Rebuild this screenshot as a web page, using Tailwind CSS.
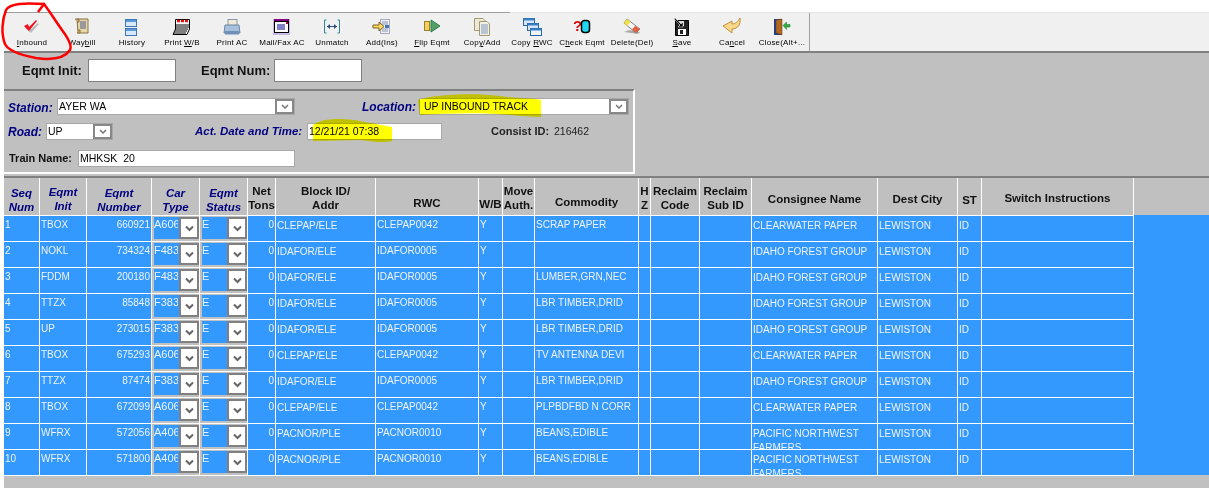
<!DOCTYPE html>
<html lang="en">
<head>
  <meta charset="UTF-8" />
  <title>Inbound</title>
  <script src="https://cdn.jsdelivr.net/npm/@tailwindcss/browser@4"></script>
</head>
<body class="relative w-[1209px] h-[488px] overflow-hidden bg-white pt-3 pl-1 font-['Liberation_Sans',Arial,sans-serif]">

  <!-- toolbar -->
  <div class="flex h-[1px]">
    <div class="w-[506px] bg-[#a0a0a0]"></div>
    <div class="flex-1 bg-[#e4e4e4]"></div>
  </div>
  <div id="toolbar" class="flex h-[40px] pl-[3px] bg-[#f0f0f0] border-b-2 border-b-[#808080]"></div>

  <div class="h-[436px] bg-[#c0c0c0]">
    <!-- eqmt row -->
    <div class="flex items-center h-[36px] pb-[1px] pl-[18px]">
      <span class="w-[66px] text-[13px] font-bold text-[#111]">Eqmt Init:</span>
      <input class="w-[88px] h-[23px] bg-white border border-[#808080]" />
      <span class="ml-[25px] w-[73px] text-[13px] font-bold text-[#111]">Eqmt Num:</span>
      <input class="w-[88px] h-[23px] bg-white border border-[#808080]" />
    </div>

    <!-- header form -->
    <div class="w-[631px] h-[85px] pl-1 pt-[7px] border-t-2 border-t-[#808080] border-r-2 border-b-2 border-r-white border-b-white text-[10.5px] text-black">
      <div class="flex items-center h-[17px]">
        <span class="w-[49px] mt-[3px] text-[12px] font-bold italic text-[#000080]">Station:</span>
        <div class="flex w-[238px] h-[17px] bg-white border border-[#a8a8a8]">
          <span class="flex-1 pl-[1px] leading-[15px]">AYER WA</span>
          <span class="sel-btn w-[19px]"></span>
        </div>
        <span class="ml-[67px] w-[57px] mt-[1px] text-[12px] font-bold italic text-[#000080]">Location:</span>
        <div class="flex w-[210px] h-[17px] bg-white border border-[#a8a8a8]">
          <span class="flex-1 pl-[4px] leading-[15px]">UP INBOUND TRACK</span>
          <span class="sel-btn w-[19px]"></span>
        </div>
      </div>
      <div class="flex items-center h-[17px] mt-[8px]">
        <span class="w-[38px] mt-[1px] text-[12px] font-bold italic text-[#000080]">Road:</span>
        <div class="flex w-[67px] h-[17px] bg-white border border-[#a8a8a8]">
          <span class="flex-1 pl-[1px] leading-[14px]">UP</span>
          <span class="sel-btn w-[19px]"></span>
        </div>
        <span class="ml-[82px] w-[112px] text-[11.5px] font-bold italic text-[#000080] whitespace-nowrap">Act. Date and Time:</span>
        <div class="w-[135px] h-[17px] pl-[1px] bg-white border border-[#a8a8a8] leading-[14px]">12/21/21 07:38</div>
        <span class="ml-[49px] w-[63px] text-[11px] font-bold text-[#222]">Consist ID:</span>
        <span class="text-[10.5px] text-[#222]">216462</span>
      </div>
      <div class="flex items-center h-[17px] mt-[10px]">
        <span class="ml-[1px] w-[69px] text-[11px] font-bold text-[#111]">Train Name:</span>
        <div class="w-[217px] h-[17px] pl-[1px] bg-white border border-[#a8a8a8] leading-[14px]">MHKSK&nbsp; 20</div>
      </div>
    </div>

    <!-- grid -->
    <div class="mt-[2px] flex border-t-2 border-t-[#808080]">
      <table class="table-fixed border-separate border-spacing-0 w-[1130px] shrink-0 text-[10px]">
        <colgroup id="cols"></colgroup>
        <thead><tr id="head"></tr></thead>
        <tbody id="rows"></tbody>
      </table>
      <div class="flex-1 flex flex-col">
        <div class="h-[37px]"></div>
        <div class="h-[260px] bg-[#3399ff]"></div>
      </div>
    </div>
  </div>

  <!-- marker scribbles pasted over the screenshot -->
  <svg class="absolute left-0 top-0 pointer-events-none mix-blend-multiply" width="1209" height="488" fill="#ffff00">
    <path d="M418 100C430 95 470 92 500 96C520 99 535 98 541 100L541 117L520 116C490 112 450 113 420 115Z" />
    <path d="M313 125C320 118 345 117 365 122L392 127L392 141C385 143 375 142 360 140L313 141Z" />
  </svg>
  <svg class="absolute left-0 top-0 pointer-events-none" width="80" height="65" fill="none" stroke="#ff0000" stroke-width="2.500">
    <path d="M38 12L44 4C50 12 55 20 62 30C68 38 72 46 70 50C64 59 50 60 36 58C20 55 8 50 5 44C1 34 2 20 6 10C10 3 25 3 44 4" />
  </svg>

  <script>
    // icons are drawn in a 24x20 box
    const icons = {
      inbound: '<path d="M5 12L9 10L11 13L18 7L19 8L11 17Z" fill="#bbb"/><path d="M4 10L8 8L9 11L16 4L17 5L9 15Z" fill="#f01020"/>',
      waybill: '<path d="M7 3H18V17H8Z" fill="#e8d8a8" stroke="#8a7040"/><path d="M5 3H9V6H7M7 17H10V14H8" fill="#c8a868" stroke="#8a7040"/><path d="M10 6H16M10 8H16M10 10H16M10 12H16" stroke="#4a5a90"/>',
      history: '<rect x="5.500" y="3.500" width="11" height="7" fill="#d8e8f8" stroke="#3a78b8"/><rect x="6" y="4" width="10" height="2" fill="#5a9ad8"/><rect x="5.500" y="12.500" width="11" height="7" fill="#d8e8f8" stroke="#3a78b8"/><rect x="6" y="13" width="10" height="2" fill="#5a9ad8"/>',
      printwb: '<path d="M5.500 3.500H19.500V13L17 18.500H3L5.500 13Z" fill="#fff" stroke="#000"/><path d="M7 5H18" stroke="#e01010" stroke-width="2.500" stroke-dasharray="3 1"/><path d="M6 9H19M6 11H19M5 13H18M5 15H17M4 17H16" stroke="#000"/>',
      printac: '<rect x="8" y="3.500" width="9" height="7" fill="#f0ead8" stroke="#8a98a8"/><path d="M5 9H19L20 17H4Z" fill="#a8c0dc" stroke="#6a88a8"/><rect x="5" y="15" width="14" height="3.500" fill="#7090b8"/>',
      mail: '<rect x="3" y="3" width="17" height="16" fill="#c8b8e8"/><rect x="4.500" y="5.500" width="14" height="11" fill="#fff" stroke="#000"/><rect x="4" y="3" width="15" height="2" fill="#800080"/><path d="M7 9H15M7 11H15M7 13H15" stroke="#000090"/><rect x="16" y="6" width="2" height="2" fill="#a01030"/>',
      unmatch: '<path d="M6.500 4H4.500V17H6.500M17.500 4H19.500V17H17.500" fill="none" stroke="#2a8a9a"/><path d="M7 10.500H17" stroke="#30507a"/><path d="M7 10.500L10 8V13ZM17 10.500L14 8V13Z" fill="#30507a"/>',
      add: '<rect x="10.500" y="3.500" width="9" height="14" fill="#eef" stroke="#aab"/><path d="M12 6H18M12 8H18M12 13H18M12 15H18" stroke="#89a"/><path d="M3 9H9V6L14 10.500L9 15V12H3Z" fill="#f8d860" stroke="#806020"/><rect x="15" y="9" width="4" height="3" fill="#3a78b8"/>',
      flip: '<rect x="4.500" y="5.500" width="5" height="9" fill="#f0d060" stroke="#a08020"/><path d="M11 4L20 10L11 16Z" fill="#50a068" stroke="#308048"/>',
      copy: '<path d="M4.500 2.500H13L15 4.500V14.500H4.500Z" fill="#eee8d8" stroke="#a09870"/><path d="M9.500 5.500H17L19.500 8V19.500H9.500Z" fill="#f4f0e4" stroke="#a09870"/><path d="M11 9H18M11 11H18M11 13H18M11 15H18M11 17H18" stroke="#7a98c0"/>',
      copyrwc: '<rect x="3.500" y="2.500" width="11" height="7" fill="#d8e8f8" stroke="#2a68a8"/><rect x="3.500" y="2.500" width="11" height="2" fill="#3a80c8"/><rect x="7.500" y="7.500" width="11" height="7" fill="#d8e8f8" stroke="#2a68a8"/><rect x="7.500" y="7.500" width="11" height="2" fill="#3a80c8"/><rect x="10.500" y="12.500" width="11" height="7" fill="#eef4fa" stroke="#2a68a8"/><rect x="10.500" y="12.500" width="11" height="2" fill="#3a80c8"/>',
      check: '<text x="3" y="15" font-size="15" font-weight="bold" fill="#d01010" font-family="Liberation Sans">?</text><rect x="11.500" y="4.500" width="8" height="12" rx="3" fill="#20d8f0" stroke="#000" stroke-width="1.500"/>',
      del: '<path d="M4 16L18 18L20 16L9 14Z" fill="#aaa"/><path d="M7 3L20 13L16 17L4 7Z" fill="#f4f4f4" stroke="#555" stroke-width="0.700"/><path d="M7 3L10.500 6L7 10L4 7Z" fill="#f0e040"/><path d="M15 10L20 13L16 17L12 13.500Z" fill="#e06040"/>',
      save: '<path d="M5.500 4.500H18.500V19.500H5.500Z" fill="#222" stroke="#000"/><rect x="8" y="13" width="8" height="6" fill="#fff"/><rect x="10" y="14" width="3" height="4" fill="#222"/><rect x="9" y="5" width="5" height="5" fill="#ddd"/><path d="M5 2L11 8L13 6V11H8L10 9L4 3Z" fill="#000" stroke="#fff" stroke-width="0.500"/>',
      cancel: '<path d="M20 2C21 8 18 13 12 13V17L3 10L12 5V8C15 8 18 6 20 2Z" fill="#f8d888" stroke="#c09040"/>',
      close: '<path d="M4 3H12V19H4Z" fill="#20408a"/><path d="M6 4L12 3V19L6 17Z" fill="#b06820" stroke="#603010" stroke-width="0.500"/><path d="M13 9.500L16.500 6V8.500H20V11H16.500V13.500Z" fill="#30b040" stroke="#207030" stroke-width="0.500"/>'
    };

    const tools = [
      ['inbound', '<u>I</u>nbound'], ['waybill', 'Way<u>b</u>ill'], ['history', 'History'],
      ['printwb', 'Print <u>W</u>/B'], ['printac', 'Print AC'], ['mail', 'Mail/Fax AC'],
      ['unmatch', 'Unmatch'], ['add', 'Add(Ins)'], ['flip', '<u>F</u>lip Eqmt'],
      ['copy', 'Cop<u>y</u>/Add'], ['copyrwc', 'Copy <u>R</u>WC'], ['check', 'C<u>h</u>eck Eqmt'],
      ['del', 'Delete(Del)'], ['save', '<u>S</u>ave'], ['cancel', 'Ca<u>n</u>cel'], ['close', 'Close(Alt+...']
    ];

    document.getElementById('toolbar').innerHTML = tools.map(([icon, label]) => `
      <div class="w-[50px] flex flex-col items-center pt-[3px]">
        <svg width="24" height="20" viewBox="0 0 24 20">${icons[icon]}</svg>
        <span class="mt-[2px] text-[8px] leading-[10px] tracking-[0.2px] whitespace-nowrap text-black">${label}</span>
      </div>`).join('') + '<div class="w-[2px] h-[38px] ml-[2px] border-l border-[#a0a0a0]"></div>';

    // dropdown arrow buttons in the form
    document.querySelectorAll('.sel-btn').forEach(el => {
      el.className = 'w-[19px] h-[15px] flex items-center justify-center bg-white border-2 border-[#888]';
      el.innerHTML = '<svg width="8" height="5" fill="none" stroke="#777" stroke-width="1.500"><path d="M1 1L4 4L7 1" /></svg>';
    });

    const widths = ['w-[36px]', 'w-[47px]', 'w-[65px]', 'w-[48px]', 'w-[48px]', 'w-[28px]', 'w-[100px]', 'w-[103px]', 'w-[24px]', 'w-[32px]', 'w-[104px]', 'w-[12px]', 'w-[49px]', 'w-[52px]', 'w-[126px]', 'w-[80px]', 'w-[24px]', 'w-[152px]'];
    document.getElementById('cols').innerHTML = widths.map(w => `<col class="${w}">`).join('');

    const navy = 'text-[#000080] italic';
    const black = 'text-[#111]';
    const heads = [
      ['Seq<br>Num', navy, 'pt-[8px]'], ['Eqmt<br>Init', navy, 'pt-[7px]'], ['Eqmt<br>Number', navy, 'pt-[8px]'],
      ['Car<br>Type', navy, 'pt-[8px]'], ['Eqmt<br>Status', navy, 'pt-[8px]'], ['Net<br>Tons', black, 'pt-[6px]'],
      ['Block ID/<br>Addr', black, 'pt-[6px]'], ['RWC', black, 'pt-[18px]'], ['W/B', black, 'pt-[19px]'],
      ['Move<br>Auth.', black, 'pt-[6px]'], ['Commodity', black, 'pt-[17px]'], ['H<br>Z', black, 'pt-[6px]'],
      ['Reclaim<br>Code', black, 'pt-[6px]'], ['Reclaim<br>Sub ID', black, 'pt-[6px]'], ['Consignee Name', black, 'pt-[14px]'],
      ['Dest City', black, 'pt-[14px]'], ['ST', black, 'pt-[15px]'], ['Switch Instructions', black, 'pt-[13px]']
    ];
    document.getElementById('head').innerHTML = heads.map(([text, color, pad]) =>
      `<th class="h-[38px] p-0 align-top border-r border-b border-white bg-[#c0c0c0] font-bold text-[11.5px] leading-[14px] whitespace-nowrap overflow-hidden ${color} ${pad}">${text}</th>`
    ).join('');

    const cp = ['CLEPAP/ELE', 'CLEPAP0042', 'CLEARWATER PAPER'];
    const ida = ['IDAFOR/ELE', 'IDAFOR0005', 'IDAHO FOREST GROUP'];
    const pac = ['PACNOR/PLE', 'PACNOR0010', 'PACIFIC NORTHWEST FARMERS'];
    const data = [
      ['1', 'TBOX', '660921', 'A606', cp, 'SCRAP PAPER'],
      ['2', 'NOKL', '734324', 'F483', ida, ''],
      ['3', 'FDDM', '200180', 'F483', ida, 'LUMBER,GRN,NEC'],
      ['4', 'TTZX', '85848', 'F383', ida, 'LBR TIMBER,DRID'],
      ['5', 'UP', '273015', 'F383', ida, 'LBR TIMBER,DRID'],
      ['6', 'TBOX', '675293', 'A606', cp, 'TV ANTENNA DEVI'],
      ['7', 'TTZX', '87474', 'F383', ida, 'LBR TIMBER,DRID'],
      ['8', 'TBOX', '672099', 'A606', cp, 'PLPBDFBD N CORR'],
      ['9', 'WFRX', '572056', 'A406', pac, 'BEANS,EDIBLE'],
      ['10', 'WFRX', '571800', 'A406', pac, 'BEANS,EDIBLE']
    ];

    const td = (inner, extra = '') =>
      `<td class="h-[26px] p-0 align-top border-r border-b border-white ${extra}"><div class="h-[25px] overflow-hidden px-[1px] pt-[2px] leading-[13px] text-[#eef3fb]">${inner}</div></td>`;
    const td2 = inner =>
      `<td class="h-[26px] p-0 align-top border-r border-b border-white"><div class="h-[25px] overflow-hidden px-[1px] pt-[3px] leading-[14px] text-[#eef3fb]">${inner}</div></td>`;
    const sel = value => `
      <td class="h-[26px] p-0 align-top border-r border-b border-white">
        <div class="flex h-[25px] border-2 border-t border-r-0 border-[#c0c0c0] text-[11px] text-[#eef3fb] leading-[13px]">
          <span class="w-[24px] mr-[1px] pt-[1px] overflow-hidden whitespace-nowrap">${value}</span>
          <span class="flex-1 flex items-center justify-center bg-white border-2 border-[#808080]">
            <svg width="9" height="7" fill="none" stroke="#666" stroke-width="2"><path d="M1 1.500L4.500 5L8 1.500" /></svg>
          </span>
        </div>
      </td>`;

    document.getElementById('rows').innerHTML = data.map(([seq, init, num, car, [block, rwc, name], commodity]) => `
      <tr class="bg-[#3399ff]">
        ${td(seq)}${td(init)}${td(num, 'text-right')}${sel(car)}${sel('E')}${td('0', 'text-right')}
        ${td2(block)}${td(rwc)}${td('Y')}${td('')}${td(commodity)}${td('')}${td('')}${td('')}
        ${td2(name)}${td2('LEWISTON')}${td2('ID')}${td('')}
      </tr>`).join('');
  </script>
</body>
</html>
